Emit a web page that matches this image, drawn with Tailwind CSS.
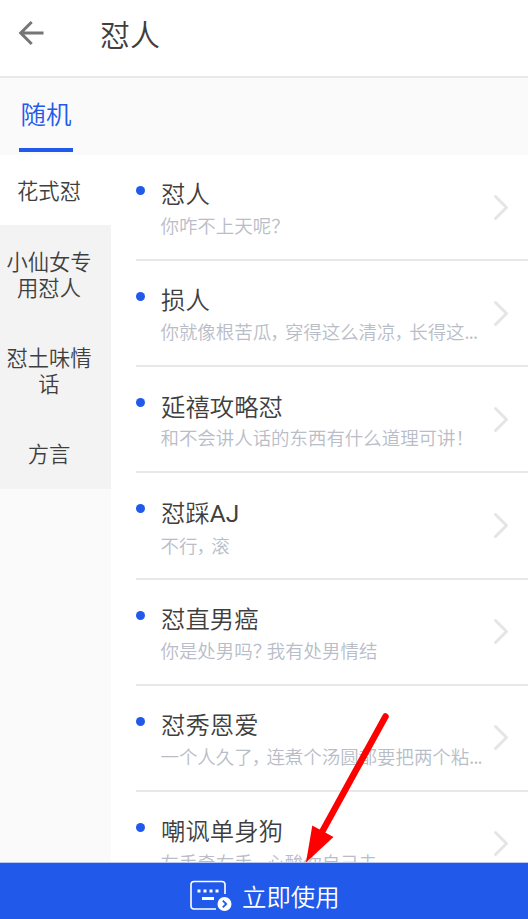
<!DOCTYPE html>
<html lang="zh-CN">
<head>
<meta charset="utf-8">
<title>怼人</title>
<script src="https://cdn.jsdelivr.net/npm/@tailwindcss/browser@4"></script>
</head>
<body class="relative flex flex-col w-[528px] h-[919px] overflow-hidden bg-white text-[#3f3f3f] font-['Noto_Sans_CJK_SC',sans-serif] font-[350]">
<header class="flex items-center shrink-0 h-[78px] pb-2.5 border-b-2 border-[#e8e8e8] bg-white">
  <svg class="ml-[18px] w-[26px] h-[26px] shrink-0" viewBox="0 0 26 26" fill="none" stroke="#757575" stroke-width="3"><path d="M25.500 13H2.500M13.700 2L2.700 13L13.700 24"/></svg>
  <h1 class="ml-[56px] text-[30px] leading-[40px]">怼人</h1>
</header>
<nav class="shrink-0 h-[77px] bg-[#fafafa] pl-[19px]">
  <div class="flex flex-col justify-between w-[54px] h-[74px] pt-[15px] text-[#2159eb]">
    <span class="text-center text-[25.5px] leading-[40px] whitespace-nowrap">随机</span>
    <span class="h-1 bg-[#2159eb]"></span>
  </div>
</nav>
<main class="flex flex-1 min-h-0">
  <aside class="w-[111px] shrink-0 bg-[#fafafa] text-[21.3px] leading-[25.5px] text-center">
    <div class="h-[70px] pt-[22px] pr-[13px] bg-white">花式怼</div>
    <div class="h-[264px] pr-[13px] pt-[23px] bg-[#f3f3f3]">
      <p>小仙女专<br>用怼人</p>
      <p class="mt-[45px]">怼土味情<br>话</p>
      <p class="mt-[45px]">方言</p>
    </div>
  </aside>
  <ul id="list" class="flex-1 min-w-0 pl-[25px] overflow-hidden"></ul>
</main>
<footer class="flex items-center shrink-0 h-[57px] border-t border-[#b9c9f5] bg-[#2159eb] text-white">
  <svg class="ml-[189px] mt-[9px] w-[44px] h-[32px]" viewBox="0 0 44 32" fill="none">
    <path d="M27 29H5Q2 29 2 26V4.500Q2 1.500 5 1.500H33Q36 1.500 36 4.500V14" stroke="#fff" stroke-width="1.600"/>
    <path d="M8.500 11H11.500M14.500 11H17.500M20.500 11H23.500M26.500 11H29.500" stroke="#fff" stroke-width="3"/>
    <path d="M13 18.500H25" stroke="#fff" stroke-width="3"/>
    <circle cx="35.500" cy="24" r="7" fill="#fff"/>
    <path d="M33.800 20.700L37.200 24L33.800 27.300" stroke="#2159eb" stroke-width="1.800"/>
  </svg>
  <span class="ml-[9px] mt-[10px] text-[24.4px] leading-[36px]">立即使用</span>
</footer>
<svg class="absolute left-0 top-0 w-[528px] h-[919px] pointer-events-none" viewBox="0 0 528 919"><path d="M385.500 716.500L322 832" stroke="#f00" stroke-width="6.500" stroke-linecap="round"/><path d="M306 862.500L312.300 825.500L333.500 837Z" fill="#f00"/></svg>
<script>
const items = [
  ['怼人', '你咋不上天呢？'],
  ['损人', '你就像根苦瓜，穿得这么清凉，长得这...'],
  ['延禧攻略怼', '和不会讲人话的东西有什么道理可讲！'],
  ['怼踩<span class="font-[Roboto] font-normal">AJ</span>', '不行，滚'],
  ['怼直男癌', '你是处男吗？我有处男情结'],
  ['怼秀恩爱', '一个人久了，连煮个汤圆都要把两个粘...'],
  ['嘲讽单身狗', '左手牵右手，心酸你自己去']
];
const narrow = s => s
  .replace(/，/g, '<span class="-ml-[1px] tracking-[-0.2em]">，</span>')
  .replace(/[？！]/g, c => `<span class="tracking-[-0.24em]">${c}</span>`)
  .replace('...', '<span class="tracking-[-0.8px]">...</span>');
document.getElementById('list').innerHTML = items.map(([title, text]) => `
  <li class="flex h-[106.17px] border-b-2 border-[#e8e8e8]">
    <span class="mt-[31px] size-[9px] rounded-full bg-[#2159eb] shrink-0"></span>
    <div class="ml-[15.5px] pt-[20.3px] w-[326.5px] whitespace-nowrap">
      <div class="pl-[0.5px] text-[24.4px] leading-[36px]">${title}</div>
      <div class="mt-[0.7px] text-[18.45px] leading-[27px] text-[#b9bdc7]">${narrow(text)}</div>
    </div>
    <svg class="ml-[5.5px] mt-[38.5px] w-[16px] h-[27px] shrink-0" viewBox="0 0 16 27" fill="none" stroke="#e5e5e5" stroke-width="3" stroke-linecap="round" stroke-linejoin="round"><path d="M2.500 2.500L13.500 13.500L2.500 24.500"/></svg>
  </li>`).join('');
</script>
</body>
</html>
